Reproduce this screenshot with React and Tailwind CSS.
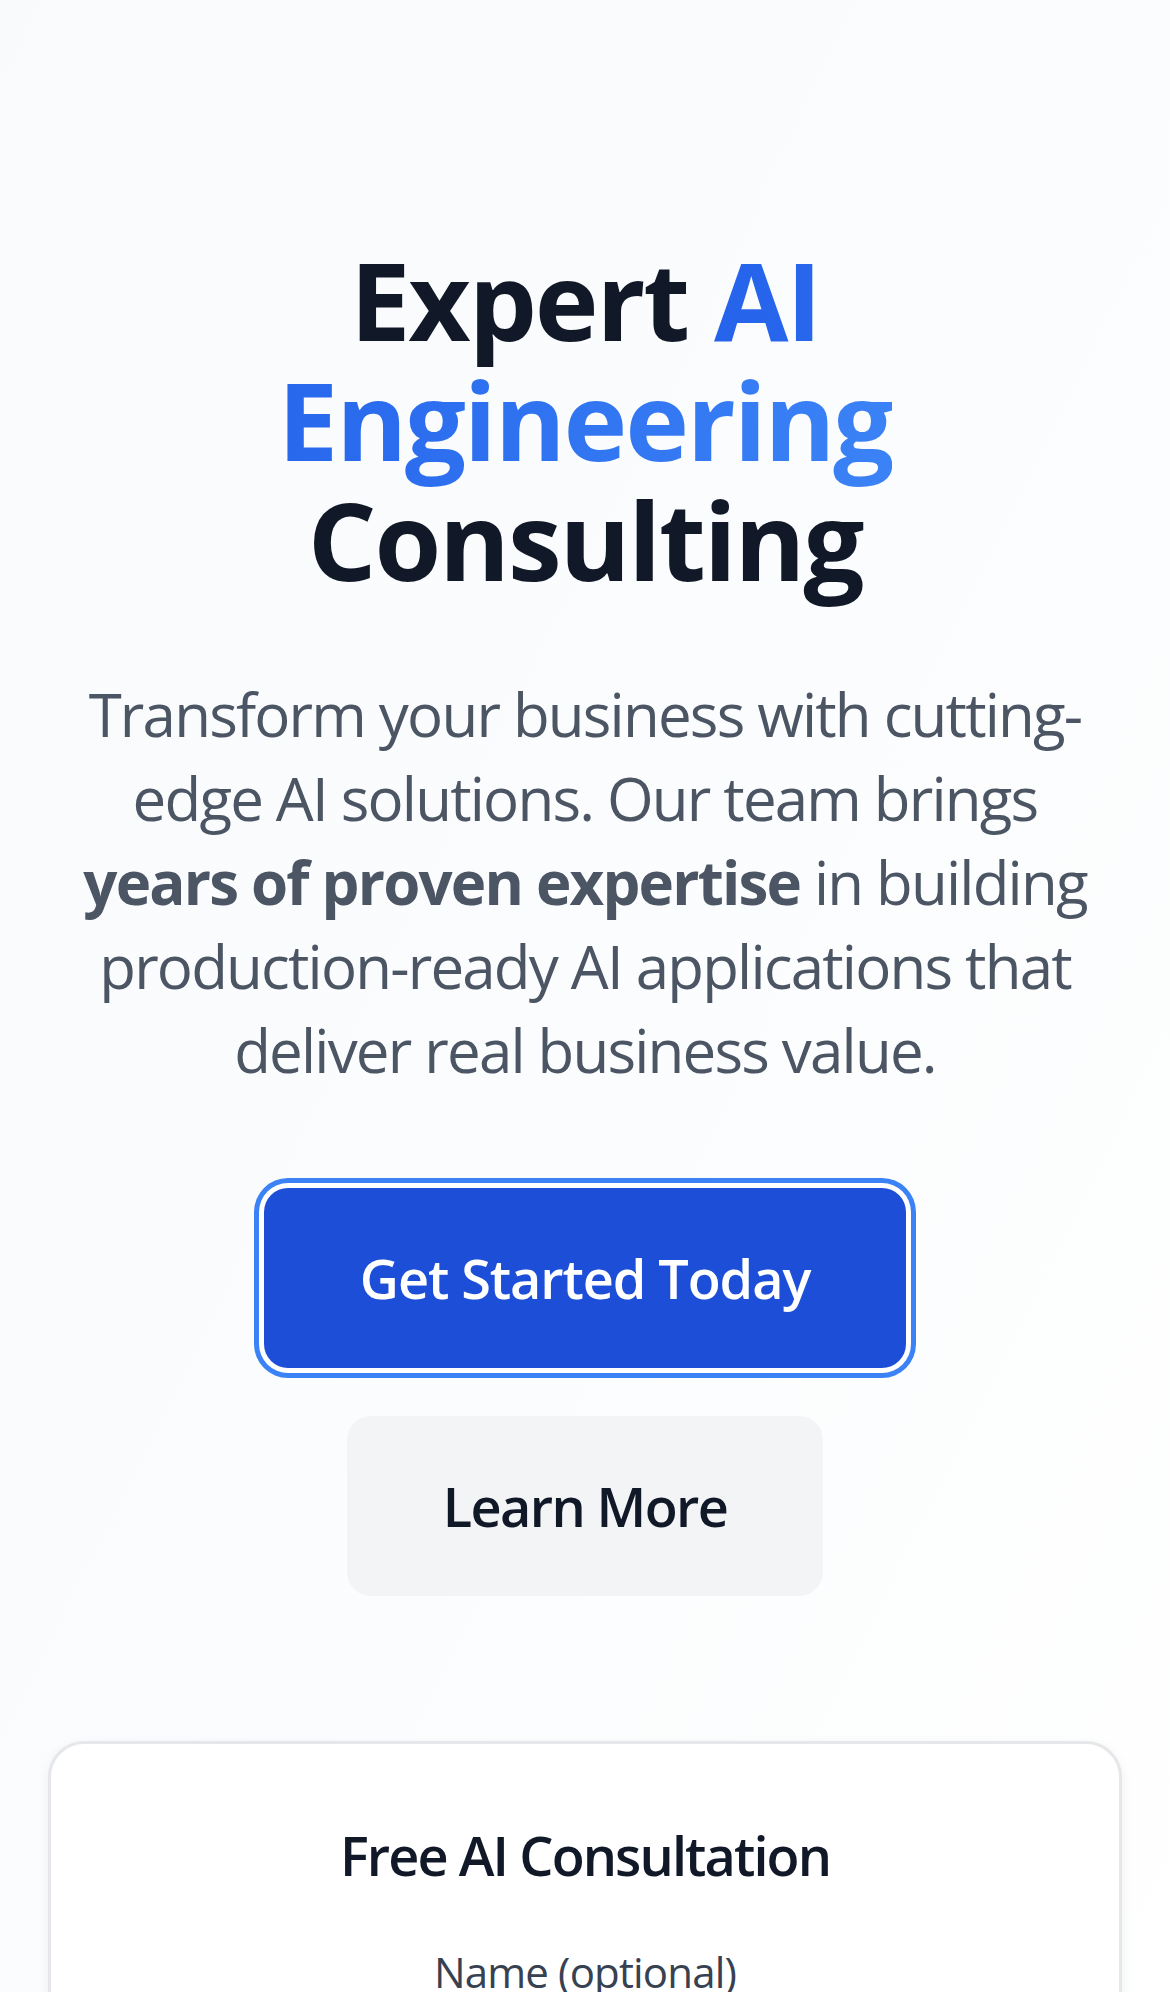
import { useState } from 'react';

const App = () => {
  const [name, setName] = useState('');

  return (
    <div className="min-h-screen bg-gradient-to-br from-[#f8fafc] to-white font-['Open_Sans',sans-serif]">
      {/* Hero */}
      <section className="px-[48px] pt-[240px] text-center">
        <h1 className="mb-[72px] text-[108px] leading-[120px] font-bold tracking-[-0.02em] text-[#111827]">
          Expert{' '}
          <span className="bg-gradient-to-r from-[#2563eb] to-[#3b82f6] bg-clip-text text-transparent">
            AI Engineering
          </span>{' '}
          Consulting
        </h1>

        <p className="mx-auto mb-[96px] max-w-[1035px] text-[60px] leading-[84px] tracking-[-0.03em] text-[#4b5563]">
          Transform your business with cutting-edge AI solutions. Our team brings{' '}
          <strong className="font-bold">years of proven expertise</strong> in building
          production-ready AI applications that deliver real business value.
        </p>

        <div className="flex flex-col items-center gap-[48px]">
          <button className="rounded-[24px] bg-[#1d4ed8] px-[96px] py-[48px] text-[54px] leading-[84px] font-semibold tracking-[-0.02em] text-white ring-[5px] ring-[#3b82f6] ring-offset-[5px] ring-offset-white">
            Get Started Today
          </button>
          <button className="rounded-[24px] bg-[#f3f4f6] px-[96px] py-[48px] text-[54px] leading-[84px] font-semibold tracking-[-0.03em] text-[#111827]">
            Learn More
          </button>
        </div>
      </section>

      {/* Consultation form */}
      <section className="mt-[145px] px-[48px] pb-[144px]">
        <div className="rounded-[36px] border-[3px] border-[#e5e7eb] bg-white p-[69px] shadow-[0_3px_12px_rgba(0,0,0,0.06)]">
          <h2 className="mb-[45px] text-center text-[54px] leading-[84px] font-semibold tracking-[-0.035em] text-[#111827]">
            Free AI Consultation
          </h2>
          <form className="flex flex-col gap-[48px]">
            <div className="flex flex-col items-center gap-[12px]">
              <label htmlFor="name" className="text-[42px] leading-[60px] font-medium tracking-[-0.02em] text-[#374151]">
                Name (optional)
              </label>
              <input
                id="name"
                value={name}
                onChange={(e) => setName(e.target.value)}
                className="w-full rounded-[24px] border-[3px] border-[#d1d5db] px-[48px] py-[36px] text-[48px]"
              />
            </div>
          </form>
        </div>
      </section>
    </div>
  );
};

export default App;
